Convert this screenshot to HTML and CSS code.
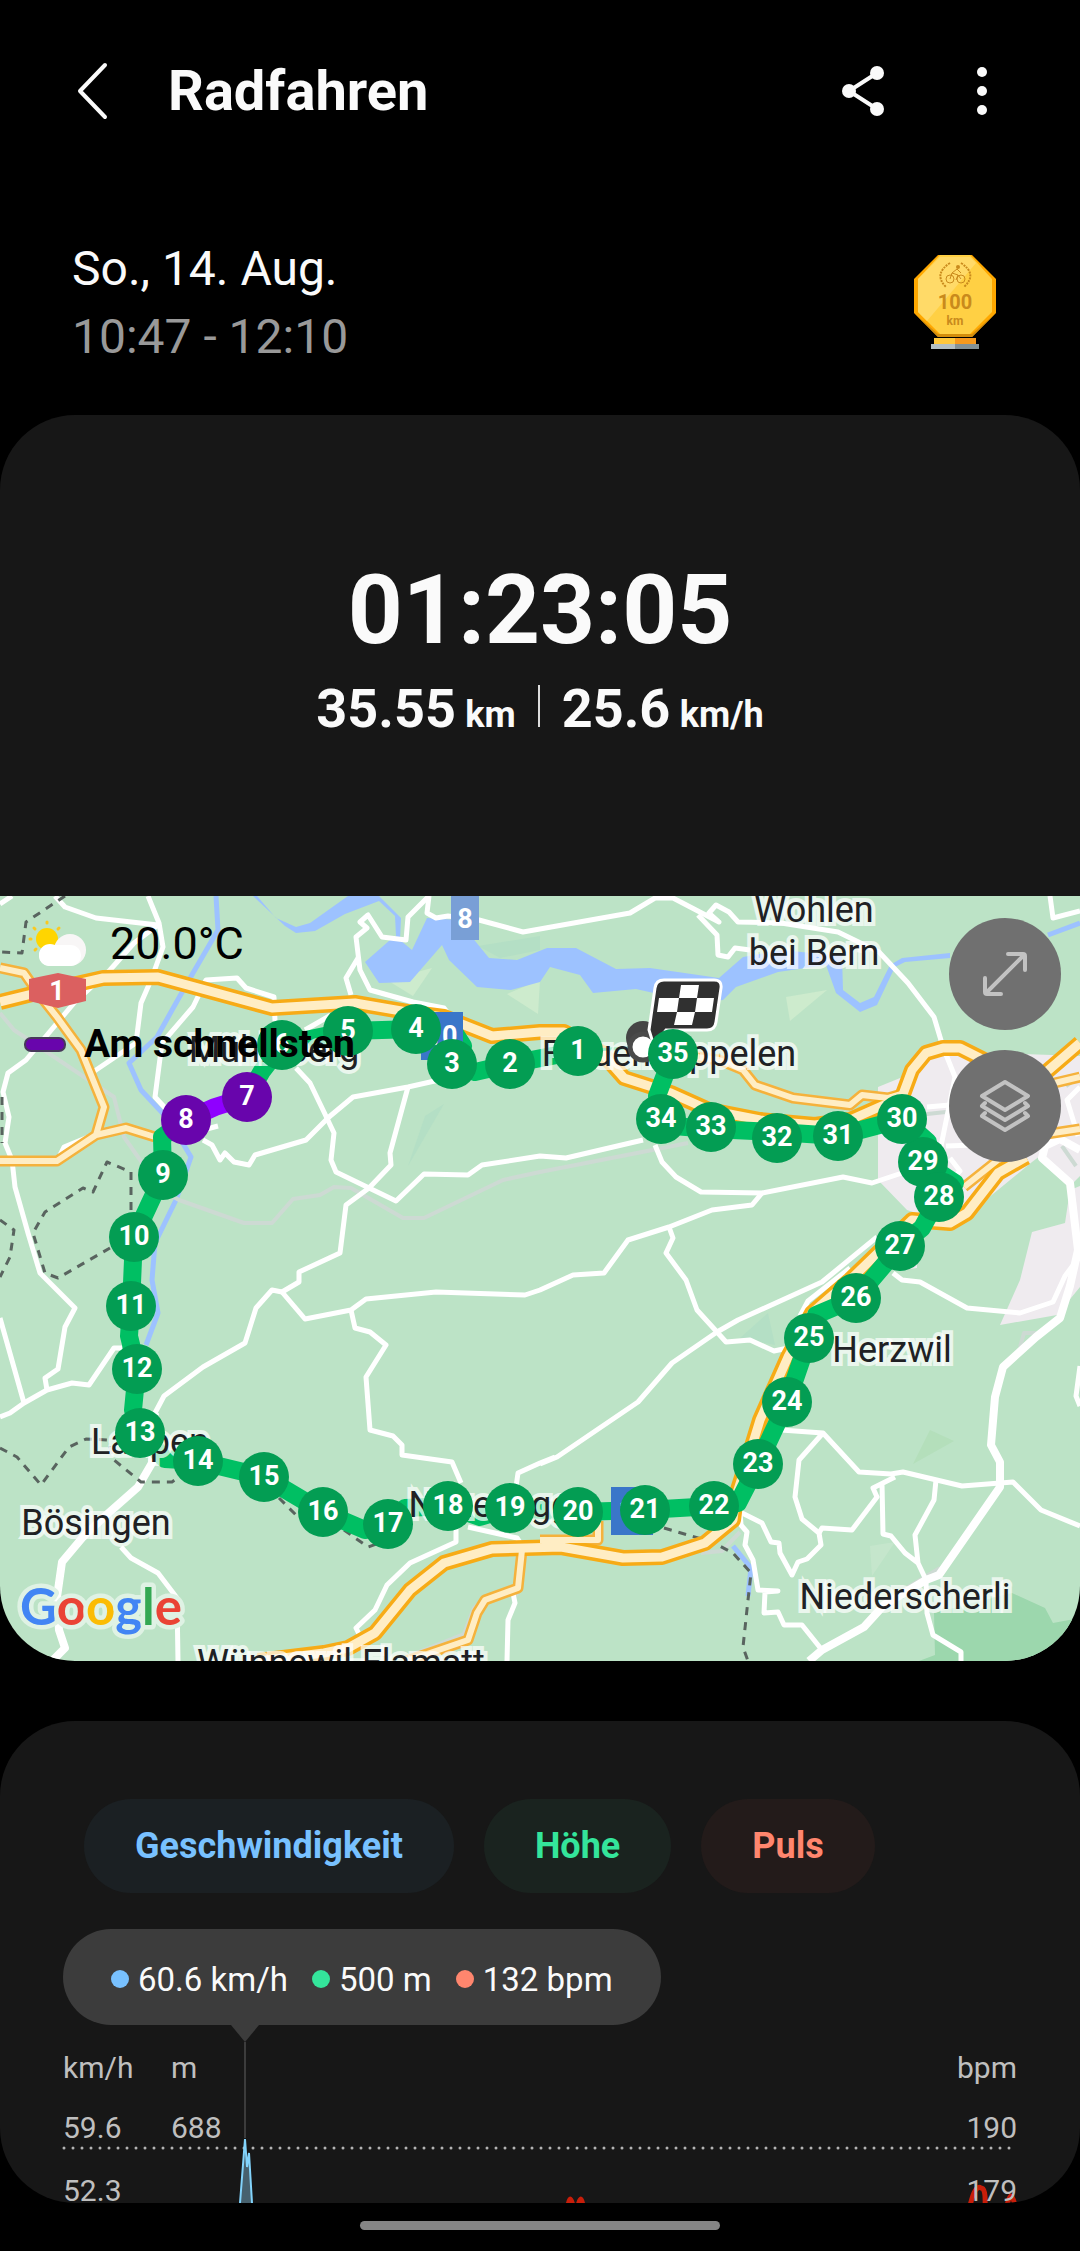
FILE: index.html
```html
<!DOCTYPE html>
<html lang="de">
<head>
    <meta charset="UTF-8">
    <meta name="viewport" content="width=device-width, initial-scale=1.0">
    <title>Radfahren</title>
    <link rel="stylesheet" href="styles.css">
</head>
<body>

    <header class="topbar">
        <button class="icon-btn" aria-label="Zurück">
            <svg width="40" height="64" viewBox="0 0 40 64"><path d="M33 6L8 32L33 58" fill="none" stroke="#fafafa" stroke-width="4" stroke-linecap="round" stroke-linejoin="round"/></svg>
        </button>
        <h1>Radfahren</h1>
        <button class="icon-btn" aria-label="Teilen">
            <svg width="48" height="56" viewBox="0 0 48 56" fill="#fafafa"><path d="M38 10L10 28L38 46" fill="none" stroke="#fafafa" stroke-width="4"/><circle cx="38" cy="10" r="7"/><circle cx="10" cy="28" r="7"/><circle cx="38" cy="46" r="7"/></svg>
        </button>
        <button class="icon-btn menu-btn" aria-label="Menü">
            <svg width="12" height="56" viewBox="0 0 12 56" fill="#fafafa"><circle cx="6" cy="9" r="5"/><circle cx="6" cy="28" r="5"/><circle cx="6" cy="47" r="5"/></svg>
        </button>
    </header>

    <section class="date-row">
        <div>
            <p class="date">So., 14. Aug.</p>
            <p class="time">10:47 - 12:10</p>
        </div>
        <svg class="medal" width="84" height="96" viewBox="0 0 84 96">
            <path d="M25 0H59L83 24V58L59 82H25L1 58V24Z" fill="#ffa800"/>
            <path d="M27 0H57L79 24V57L57 79H27L5 57V24Z" fill="#ffd044"/>
            <path d="M27 2H57L63 8L14 66L5 57V24Z" fill="#ffda68"/>
            <path d="M1 58L25 82H59L83 58L59 79H25Z" fill="#d38d0c"/>
            <rect x="21" y="83" width="21" height="6" fill="#ffc83c"/>
            <rect x="42" y="83" width="21" height="6" fill="#f79a1e"/>
            <rect x="18" y="89" width="24" height="5" fill="#b3bfc2"/>
            <rect x="42" y="89" width="24" height="5" fill="#849296"/>
            <g fill="none" stroke="#c98a1c">
                <path d="M37 8Q20 19 33 32M48 8Q65 19 51 32" stroke-width="2" stroke-dasharray="2 1"/>
                <circle cx="37" cy="24" r="4"/><circle cx="48" cy="24" r="4"/>
                <path d="M37 24L39 18L45 20L43 25M39 18L44 14L48 18M45 20L48 24"/>
            </g>
            <circle cx="45" cy="12" r="2" fill="#c98a1c"/>
            <text x="42" y="54" class="medal-num">100</text>
            <text x="42" y="70" class="medal-unit">km</text>
        </svg>
    </section>

    <section class="card summary">
        <p class="duration">01:23:05</p>
        <div class="stats">
            <p>35.55 <span>km</span></p>
            <i class="sep"></i>
            <p>25.6 <span>km/h</span></p>
        </div>
    </section>

    <section class="map">
        <svg class="map-svg" viewBox="0 0 1080 765">
            <rect width="1080" height="765" fill="#bce3c6"/>

            <!-- land areas -->
            <g fill="#efebef">
                <path d="M878 191L905 180L935 155L1080 160V280L1070 290L1040 260L1032 266L965 321L940 325L907 314L878 284Z"/>
                <path d="M1032 336L1065 327L1070 294L1080 290V391L1057 419L1000 429L1020 384Z"/>
                <path d="M890 345L917 340V372L895 375Z"/>
            </g>
            <path d="M1012 697L1045 712L1053 727L1080 722V765H919L935 759L934 717Z" fill="#9cd7ad"/>
            <g fill="#cdebcd">
                <path d="M786 101L827 94L790 125Z"/>
                <path d="M387 84L432 72L413 100Z"/>
                <path d="M507 98L540 84L538 118Z"/>
            </g>
            <g fill="#b4dfc5">
                <path d="M740 442L768 417L775 449Z"/>
                <path d="M408 270L425 220L444 208Z"/>
                <path d="M478 50L540 40V54L500 62Z"/>
            </g>
            <path d="M913 568L930 534L954 545Z" fill="#b4dfbb"/>
            <path d="M870 650L895 646L872 680Z" fill="#c5e6cc"/>

            <!-- water -->
            <path d="M253 0L285 30L296 37L315 35L345 18L379 5L395 20L396 40L390 44L365 66L379 87L410 86L442 49L449 64L477 91L511 94L540 86L550 71L580 79L593 97L636 93L698 107L723 104L736 91L778 76L826 69L836 97L860 116L877 109L895 71L905 66L950 62V57L902 62L890 69L874 101L860 107L843 94L842 60L781 54L743 61L719 82L650 72L616 73L576 52H547L517 64L489 62L458 24L427 22L412 54L400 44L401 22L379 0H348L310 27L296 31L276 22L257 0Z" fill="#9dc2ff"/>
            <g class="line river">
                <path d="M216 0L218 34L193 77L176 107L157 141L129 167L141 194L169 224L191 261L176 304L155 347L152 384L158 417L146 449"/>
                <path d="M1048 39L1080 27"/>
                <path d="M733 650L751 672L748 700"/>
            </g>

            <g class="line rail">
                <path d="M0 117L14 134L114 201L124 241L138 261L162 294L179 304L244 327H272L293 303L320 299L334 291L351 292L403 322H424L503 284L540 276L688 247"/>
                <path d="M406 761L464 738L474 712L485 702M525 655L516 700M701 657L722 655L740 636"/>
                <path d="M900 696L940 672M1020 451L1024 437H1036M918 219L955 215M1066 190L1080 180M1062 250L1076 270"/>
            </g>

            <g class="line road">
                <path d="M0 8L12 0M55 0L65 11L96 22L158 29"/>
                <path d="M148 0L159 27L163 51L151 84L141 107L136 147L93 176"/>
                <path d="M158 29L134 47L110 74L74 107L26 164L8 177L3 196L9 221L5 247L12 264L15 291L28 337L40 377L75 412L65 431L58 473L45 482L47 494"/>
                <path d="M93 239L64 251L60 259"/>
                <path d="M275 125L274 101L246 92L237 82L206 84L193 111L162 147L155 201L168 215"/>
                <path d="M203 234L218 230M203 244L212 249L220 264L225 257L234 266L249 269L255 259L306 244L329 221L353 201L408 191L448 182"/>
                <path d="M408 191L390 257L391 269L369 292L346 309L340 357L299 376V386L282 396L272 394L256 412L245 447L203 471L164 500L155 517"/>
                <path d="M296 172L310 187L324 216L334 237L331 264L336 276L396 305L424 278L468 279L482 269L540 260L566 262L643 244"/>
                <path d="M305 134L331 119M429 0L408 21L406 44L382 41L368 19L360 26L367 32L356 41L360 74L370 94L413 106L444 112L451 121M358 62L346 82L351 99"/>
                <path d="M429 0L427 17L436 22L448 20L479 24L523 36L630 17L655 2L673 2L719 26L709 17L716 9L729 16L738 26L781 27L838 36L879 56L908 87L934 121L943 151L955 181L940 255"/>
                <path d="M698 19L717 39L718 59L728 61L735 52L750 54M1050 0L1053 22L1080 15"/>
                <path d="M655 249L662 266L676 281L701 296L762 297L843 281L872 287L902 277"/>
                <path d="M762 297L752 309L712 314L669 331L628 344L604 377L573 379L540 394L525 399L436 396L366 403L351 414L305 423L282 396"/>
                <path d="M669 331L673 342L666 357L686 384L697 414L717 436L726 446L750 444L774 455L788 452"/>
                <path d="M540 568L557 561L638 506L672 467L717 436L738 424L822 386L877 341M800 420L808 405L850 372"/>
                <path d="M351 414L355 432L370 436L386 449L366 481L370 534L393 540L402 549V559L452 566L461 587M516 591L518 577L540 567L555 561"/>
                <path d="M456 630V646L410 667L387 689L375 714L356 732L362 744M468 631L517 642L523 651"/>
                <path d="M121 651L131 662L158 677L177 702L178 765M513 697L515 707L508 724L507 765"/>
                <path d="M0 521L10 517L24 507L47 494L72 487L89 489L114 452H122M0 422L24 507"/>
                <path d="M781 534L823 537L859 576L891 578L903 576L962 590L1013 586L1041 614L1080 630"/>
                <path d="M823 537L799 564L795 601L802 623L819 637L821 649L807 663L798 666L792 679L780 657L779 647L771 646L762 627L740 616L741 629L747 636L745 649L753 664L758 694L778 695L765 696L764 717L778 716L784 729H802L822 754"/>
                <path d="M819 637L822 632L852 634L877 601L873 592L895 581M882 587L883 638L891 640L905 657L918 667L926 684M936 584L934 604L915 639L918 667"/>
                <path d="M926 684L927 717L933 739L961 756V765M893 377L902 384L920 386L967 412L1020 417L1053 406L1065 380L1080 360"/>
                <path d="M927 211L950 209M946 250L975 249M950 262L960 275L945 290M1080 191L1067 204L1078 240M1080 470L1076 500L1080 510"/>
            </g>
            <g class="line road wide">
                <path d="M155 517L152 567L138 591L104 621L83 641L62 666L57 701L59 734L65 752L52 765"/>
                <path d="M809 765L822 754L864 731L884 709L926 684L939 679L1000 591V566L991 549L995 501L1003 471L1036 441L1060 422L1070 390L1078 354L1070 287L1042 262L1045 250L1060 243L1080 254"/>
            </g>

            <g class="line borders">
                <path d="M65 0L26 26L22 57L0 56M2 201V247M131 314V276L107 266L93 296L83 292L45 316L33 337L45 377L58 382L110 352M0 324L14 334L10 361L0 381"/>
                <path d="M0 552L17 561L41 589L69 551L86 543L107 544L114 564L141 586H172L179 581M279 602L296 619M344 634L368 651L385 645"/>
                <path d="M664 632L712 646L733 657L751 677L748 704L743 751L748 765"/>
            </g>

            <defs>
                <g id="minor">
                    <path d="M0 72L24 77L38 97L57 121L81 154L104 211L96 239M0 265H57L96 239L126 232L155 241"/>
                    <path d="M697 161L719 164L743 174L755 189L793 202L850 209L862 199L888 202L905 197"/>
                    <path d="M1040 239L1080 233M1046 189L1080 181M998 264L964 291M598 625V644H540M522 654L518 692L485 704L477 717L468 744L430 757L406 765"/>
                </g>
                <g id="major">
                    <path d="M0 106L28 99L103 82L158 81L272 112L355 107L413 117L444 121L492 140L540 136H564L602 157L624 182L671 197L709 214L760 224L815 229L850 224L902 201L912 174L926 157L943 152H960L984 164L1030 190L1080 147"/>
                    <path d="M1026 261L998 277L967 317L950 327L912 324L850 384L812 417L788 461L760 524L752 550L736 600L733 624L705 647L662 661L623 662L561 651L492 653L444 667L410 694L375 737L348 752L324 757L258 765"/>
                </g>
            </defs>
            <use href="#minor" class="line minor-edge"/>
            <use href="#major" class="line major-edge"/>
            <use href="#minor" class="line minor-fill"/>
            <use href="#major" class="line major-fill"/>

            <!-- road shields -->
            <g class="shield">
                <path d="M29 83L58 77L86 83V105L58 112L29 105Z" fill="#db6060"/>
                <text x="57" y="104">1</text>
                <rect x="451" width="28" height="44" fill="#799fd6"/>
                <text x="465" y="32">8</text>
            </g>

            <!-- route -->
            <path class="line route" d="M578 155L510 168L475 176L452 168L463 150L452 133L416 133L348 135L282 149L262 175L247 201"/>
            <path class="line route start" d="M643 151L578 155"/>
            <path class="line route" d="M186 224L162 241L163 279L134 341L131 410L129 440L137 473L133 514L140 537L165 563L198 565L264 581L323 616L365 634L388 628L405 612L448 610L480 621L510 612L578 616L645 614L714 610L738 607L758 568L787 506L809 442L816 419L856 402L900 350L922 332L939 301L955 287L923 266L928 246L902 223L838 240L777 236L711 233L661 229L657 200L673 158"/>
            <path class="line route fastest" d="M247 201L215 211L186 224"/>

            <g class="shield">
                <rect x="421" y="116" width="42" height="48" fill="#3a76c9"/>
                <text x="442" y="149">10</text>
                <rect x="611" y="591" width="42" height="48" fill="#3a76c9"/>
                <text x="634" y="624">12</text>
            </g>

            <g class="places">
                <text x="814" y="26">Wohlen</text>
                <text x="814" y="69">bei Bern</text>
                <text x="274" y="166">Mühleberg</text>
                <text x="669" y="170">Frauenkappelen</text>
                <text x="150" y="558">Laupen</text>
                <text x="96" y="639">Bösingen</text>
                <text x="490" y="621">Neuenegg</text>
                <text x="892" y="466">Herzwil</text>
                <text x="905" y="713">Niederscherli</text>
                <text x="341" y="779">Wünnewil-Flamatt</text>
            </g>

            <!-- start and finish -->
            <circle cx="643" cy="142" r="17" fill="#454545"/>
            <circle cx="643" cy="151" r="13" fill="#fff" stroke="#4a4a4a" stroke-width="5"/>
            <path d="M664 84H714Q722 84 721 92L716 126Q715 134 707 134H666L654 150L649 134L655 92Q656 84 664 84Z" fill="#303030" stroke="#fff" stroke-width="3"/>
            <path d="M681 89H699L697 102H679ZM659 102H679L677 116H657ZM697 102H714L712 116H695ZM677 116H695L692 129H674Z" fill="#fff"/>

            <g id="markers" class="markers"></g>

            <text class="google" x="20" y="729"><tspan fill="#4285f4">G</tspan><tspan fill="#ea4335">o</tspan><tspan fill="#fbbc05">o</tspan><tspan fill="#4285f4">g</tspan><tspan fill="#34a853">l</tspan><tspan fill="#ea4335">e</tspan></text>
        </svg>

        <div class="map-info">
            <div class="weather">
                <svg width="60" height="48" viewBox="0 0 60 48">
                    <g stroke="#f9c922" stroke-width="3" stroke-linecap="round"><path d="M19 2V3M6 8L7 9M31 8L30 9M2 19H3M7 30L8 29"/></g>
                    <circle cx="19" cy="19" r="11" fill="#ffd500"/>
                    <circle cx="42" cy="30" r="16" fill="#f8f6f6"/>
                    <rect x="11" y="25" width="42" height="21" rx="10" fill="#fff"/>
                    <circle cx="22" cy="35" r="11" fill="#fff"/>
                </svg>
                <span>20.0°C</span>
            </div>
            <div class="legend"><i></i><span>Am schnellsten</span></div>
        </div>

        <div class="map-buttons">
            <button aria-label="Vollbild">
                <svg width="48" height="48" viewBox="0 0 48 48"><path d="M6 42L42 6M27 4H42Q44 4 44 6V20M4 28V42Q4 44 6 44H20"/></svg>
            </button>
            <button aria-label="Kartentyp">
                <svg width="52" height="56" viewBox="0 0 52 56"><path d="M26 4L49 18L26 32L3 18ZM6 25L3 28L26 42L49 28L46 25M6 35L3 38L26 52L49 38L46 35"/></svg>
            </button>
        </div>
    </section>

    <section class="card details">
        <div class="chips">
            <button class="chip speed">Geschwindigkeit</button>
            <button class="chip height">Höhe</button>
            <button class="chip pulse">Puls</button>
        </div>

        <div class="tooltip">
            <span class="value speed">60.6 km/h</span>
            <span class="value height">500 m</span>
            <span class="value pulse">132 bpm</span>
        </div>

        <div class="chart">
            <svg class="plot" viewBox="0 0 954 165">
                <path d="M1 110H950" stroke="#b4b4b4" stroke-width="3" stroke-dasharray="0 9" stroke-linecap="round"/>
                <path d="M182 4V100" stroke="#3c3c3c" stroke-width="2"/>
                <path d="M177 165L182 101L184 129L186 115L189 165" fill="#47616e" stroke="#82d3fb" stroke-width="2"/>
                <path d="M505 168Q507 154 510 168M515 168Q518 154 520 168M907 168Q912 146 918 150Q923 150 922 168M944 168Q948 148 952 168" fill="none" stroke="#c81e0a" stroke-width="5"/>
            </svg>
            <div class="axis"><span>km/h</span><span>m</span><span>bpm</span></div>
            <div class="axis"><span>59.6</span><span>688</span><span>190</span></div>
            <div class="axis last"><span>52.3</span><span></span><span>179</span></div>
        </div>
    </section>

    <footer class="navbar"><i></i></footer>

    <script>
        // kilometre marks: x, y
        const marks = [
            [578, 155], [510, 168], [452, 168], [416, 133], [348, 135], [282, 149], [247, 201],
            [186, 224], [163, 279], [134, 341], [131, 410], [137, 473], [140, 537], [198, 565],
            [264, 581], [323, 616], [388, 628], [448, 610], [510, 612], [578, 616], [645, 614],
            [714, 610], [758, 568], [787, 506], [809, 442], [856, 402], [900, 350], [939, 301],
            [923, 266], [902, 223], [838, 240], [777, 242], [711, 231], [661, 223], [673, 158]
        ];
        // later marks lie on top, except on the way back into town (29 under 28)
        const order = marks.map((m, i) => i + 1).filter(n => n !== 28).concat(28);

        let html = "";
        order.forEach(n => {
            const [x, y] = marks[n - 1];
            const cls = n === 7 || n === 8 ? "fast" : "";
            html += `<g class="${cls}"><circle cx="${x}" cy="${y}" r="25"/><text x="${x}" y="${y + 8}">${n}</text></g>`;
        });
        document.getElementById("markers").innerHTML = html;
    </script>

</body>
</html>
```
FILE: styles.css
```css
* {
    box-sizing: border-box;
}
body {
    margin: 0;
    height: 100vh;
    display: flex;
    flex-direction: column;
    background: #000;
    color: #fafafa;
    font-family: Roboto, 'Liberation Sans', sans-serif;
}
h1, p {
    margin: 0;
}
button {
    border: none;
    padding: 0;
    font-family: inherit;
    cursor: pointer;
}
svg {
    display: block;
}

.topbar {
    display: flex;
    flex-shrink: 0;
    align-items: center;
    height: 182px;
    padding: 0 92px 0 72px;
}
.topbar h1 {
    flex: 1;
    margin-left: 56px;
    font-size: 56px;
    line-height: 64px;
    font-weight: 700;
}
.icon-btn {
    background: none;
}
.menu-btn {
    margin-left: 89px;
}

.date-row {
    display: flex;
    flex-shrink: 0;
    justify-content: space-between;
    align-items: center;
    padding: 53px 83px 44px 72px;
    font-size: 48px;
    line-height: 68px;
}
.time {
    color: #999;
}
.medal text {
    text-anchor: middle;
    fill: #c98a1c;
    font-weight: 700;
}
.medal .medal-num {
    font-size: 20px;
    line-height: 24px;
}
.medal .medal-unit {
    font-size: 12px;
    line-height: 16px;
}

.card {
    background: #171717;
    border-radius: 75px;
}
.summary {
    flex-shrink: 0;
    padding: 139px 20px 155px;
    border-radius: 75px 75px 0 0;
    text-align: center;
    font-weight: 700;
}
.duration {
    font-size: 96px;
    line-height: 112px;
}
.stats {
    display: flex;
    justify-content: center;
    align-items: center;
    gap: 22px;
    margin-top: 11px;
    font-size: 54px;
    line-height: 64px;
}
.stats span {
    margin-left: -4px;
    font-size: 36px;
    line-height: 36px;
}
.sep {
    width: 2px;
    height: 42px;
    margin-bottom: 6px;
    background: #ddd;
}

.map {
    position: relative;
    flex-shrink: 0;
    overflow: hidden;
    border-radius: 0 0 75px 75px;
}
.map-svg {
    width: 100%;
    height: auto;
}
.line {
    fill: none;
    stroke-linejoin: round;
}
.river {
    stroke: #9dc2ff;
    stroke-width: 5;
}
.rail {
    stroke: #cddad3;
    stroke-width: 4;
}
.road {
    stroke: #fff;
    stroke-width: 5;
}
.road.wide {
    stroke-width: 8;
}
.borders {
    stroke: #59645f;
    stroke-width: 3;
    stroke-dasharray: 8 7;
}
.minor-edge {
    stroke: #f5b23c;
    stroke-width: 11;
}
.minor-fill {
    stroke: #ffedc4;
    stroke-width: 6;
}
.major-edge {
    stroke: #f7ab16;
    stroke-width: 16;
}
.major-fill {
    stroke: #ffedc4;
    stroke-width: 9;
}
.route {
    stroke: #00bf63;
    stroke-width: 18;
}
.route.start {
    stroke-width: 3;
}
.route.fastest {
    stroke: #8f00ff;
}
.shield text,
.markers text {
    fill: #fff;
    font-size: 27px;
    font-weight: 700;
    text-anchor: middle;
}
.markers circle {
    fill: #039d53;
}
.markers .fast circle {
    fill: #6805ac;
}
.places text {
    fill: #202124;
    font-size: 36px;
    text-anchor: middle;
    paint-order: stroke;
    stroke: rgba(255, 255, 255, 0.7);
    stroke-width: 8px;
}
.google {
    font-family: Lato, sans-serif;
    font-size: 51px;
    font-weight: 700;
    paint-order: stroke;
    stroke: #dff2e4;
    stroke-width: 9px;
    stroke-linejoin: round;
}

.map-info {
    position: absolute;
    top: 20px;
    left: 24px;
    color: #000;
}
.weather {
    display: flex;
    align-items: center;
    gap: 22px;
    padding-left: 4px;
    font-size: 45px;
    line-height: 56px;
}
.legend {
    display: flex;
    align-items: center;
    gap: 18px;
    margin-top: 50px;
    font-size: 39px;
    line-height: 44px;
    font-weight: 700;
}
.legend i {
    width: 42px;
    height: 15px;
    border: 2px solid #47395a;
    border-radius: 7px;
    background: #6805ac;
}
.map-buttons {
    position: absolute;
    top: 22px;
    right: 19px;
    display: flex;
    flex-direction: column;
    gap: 20px;
}
.map-buttons button {
    display: flex;
    align-items: center;
    justify-content: center;
    width: 112px;
    height: 112px;
    border-radius: 50%;
    background: #707070;
}
.map-buttons path {
    fill: none;
    stroke: #c2c2c2;
    stroke-width: 4;
    stroke-linecap: round;
    stroke-linejoin: round;
}

.details {
    flex: 1 1 0;
    min-height: 300px;
    margin-top: 60px;
    padding: 78px 63px 0;
    overflow: hidden;
}
.chips {
    display: flex;
    gap: 30px;
    padding-left: 21px;
}
.chip {
    height: 94px;
    padding: 0 51px;
    border-radius: 47px;
    font-size: 36px;
    font-weight: 700;
}
.chip.speed {
    background: #1b2023;
    color: #78c1ff;
}
.chip.height {
    background: #1a231f;
    color: #34e59b;
}
.chip.pulse {
    background: #231b1a;
    color: #ff866e;
}
.tooltip {
    position: relative;
    display: inline-flex;
    align-items: center;
    gap: 24px;
    height: 96px;
    margin-top: 36px;
    padding: 4px 48px 0;
    border-radius: 48px;
    background: #3c3c3c;
    font-size: 33px;
    vertical-align: top;
}
.tooltip::after {
    content: "";
    position: absolute;
    top: 100%;
    left: 168px;
    border: 14px solid transparent;
    border-top: 17px solid #3c3c3c;
    border-bottom: none;
}
.value {
    display: flex;
    align-items: center;
    gap: 9px;
}
.value::before {
    content: "";
    width: 18px;
    height: 18px;
    border-radius: 50%;
    background: #78c1ff;
}
.value.height::before {
    background: #34e59b;
}
.value.pulse::before {
    background: #ff866e;
}
.chart {
    position: relative;
    margin-top: 13px;
    color: #bfbfbf;
    font-size: 30px;
    line-height: 60px;
}
.axis {
    position: relative;
    display: grid;
    grid-template-columns: 108px 1fr auto;
}
.axis.last {
    margin-top: 3px;
}
.plot {
    position: absolute;
    top: 0;
    left: 0;
    width: 100%;
    overflow: visible;
}

.navbar {
    display: flex;
    flex-shrink: 0;
    justify-content: center;
    height: 48px;
    padding-top: 18px;
}
.navbar i {
    width: 33.33%;
    height: 9px;
    border-radius: 5px;
    background: #858585;
}
```
